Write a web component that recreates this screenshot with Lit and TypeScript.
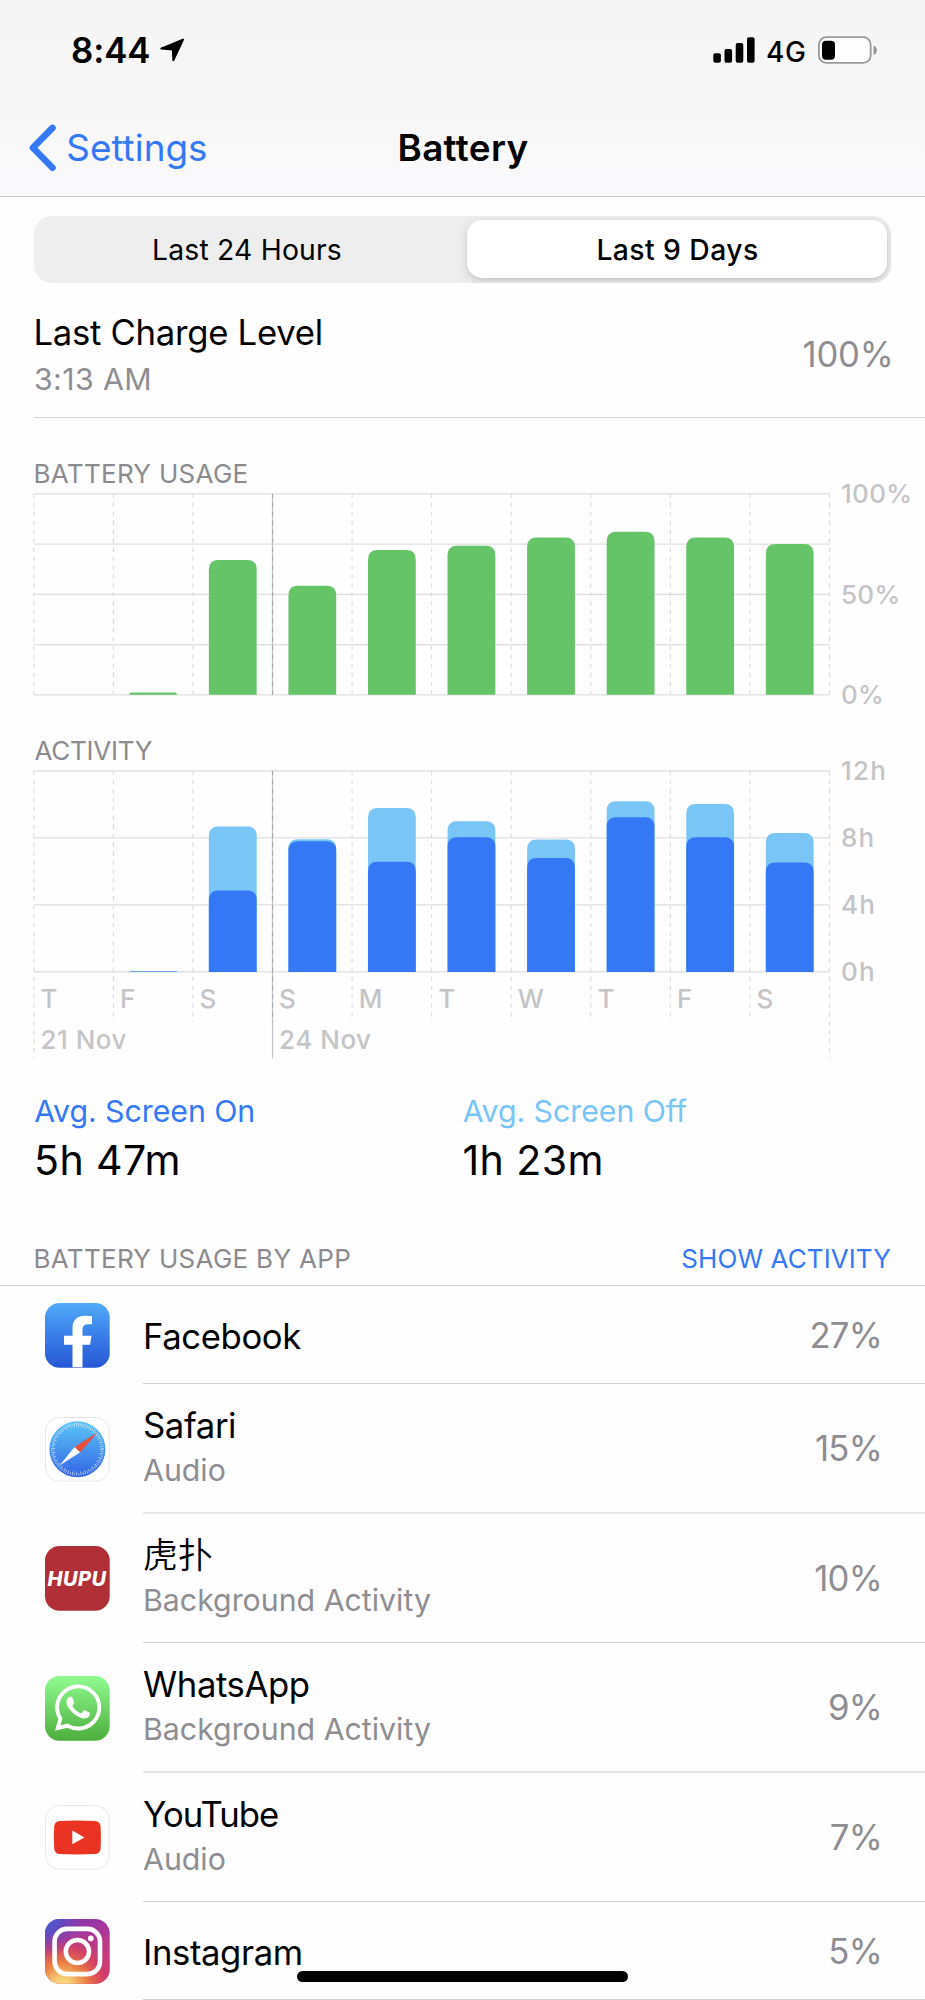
import { LitElement, html, svg, css, nothing } from "lit";
import { customElement, property, state } from "lit/decorators.js";
import { classMap } from "lit/directives/class-map.js";

type IconName = "facebook" | "safari" | "hupu" | "whatsapp" | "youtube" | "instagram";

interface AppUsage {
  name: string;
  detail?: string;
  share: string;
  icon: IconName;
}

interface Day {
  label: string;
  date?: string;
  level: number;
  total: number;
  screenOn: number;
}

const DAYS: Day[] = [
  { label: "T", date: "21 Nov", level: 0, total: 0, screenOn: 0 },
  { label: "F", level: 1.2, total: 0.035, screenOn: 0.02 },
  { label: "S", level: 67.1, total: 8.68, screenOn: 4.86 },
  { label: "S", date: "24 Nov", level: 54.2, total: 7.92, screenOn: 7.8 },
  { label: "M", level: 72.1, total: 9.78, screenOn: 6.57 },
  { label: "T", level: 74.1, total: 9, screenOn: 8.04 },
  { label: "W", level: 78.2, total: 7.9, screenOn: 6.8 },
  { label: "T", level: 81.1, total: 10.19, screenOn: 9.24 },
  { label: "F", level: 78.2, total: 10.03, screenOn: 8.04 },
  { label: "S", level: 75, total: 8.3, screenOn: 6.53 },
];

const APPS: AppUsage[] = [
  { name: "Facebook", share: "27%", icon: "facebook" },
  { name: "Safari", detail: "Audio", share: "15%", icon: "safari" },
  { name: "虎扑", detail: "Background Activity", share: "10%", icon: "hupu" },
  { name: "WhatsApp", detail: "Background Activity", share: "9%", icon: "whatsapp" },
  { name: "YouTube", detail: "Audio", share: "7%", icon: "youtube" },
  { name: "Instagram", share: "5%", icon: "instagram" },
];

const WHATSAPP_PATH =
  "M17.472 14.382c-.297-.149-1.758-.867-2.03-.967-.273-.099-.471-.148-.67.15-.197.297-.767.966-.94 1.164-.173.199-.347.223-.644.075-.297-.15-1.255-.463-2.39-1.475-.883-.788-1.48-1.761-1.653-2.059-.173-.297-.018-.458.13-.606.134-.133.298-.347.446-.52.149-.174.198-.298.298-.497.099-.198.05-.371-.025-.52-.075-.149-.669-1.612-.916-2.207-.242-.579-.487-.5-.669-.51-.173-.008-.371-.01-.57-.01-.198 0-.52.074-.792.372-.272.297-1.04 1.016-1.04 2.479 0 1.462 1.065 2.875 1.213 3.074.149.198 2.096 3.2 5.077 4.487.709.306 1.262.489 1.694.625.712.227 1.36.195 1.871.118.571-.085 1.758-.719 2.006-1.413.248-.694.248-1.289.173-1.413-.074-.124-.272-.198-.57-.347m-5.421 7.403h-.004a9.87 9.87 0 01-5.031-1.378l-.361-.214-3.741.982.998-3.648-.235-.374a9.86 9.86 0 01-1.51-5.26c.001-5.45 4.436-9.884 9.888-9.884 2.64 0 5.122 1.03 6.988 2.898a9.825 9.825 0 012.893 6.994c-.003 5.45-4.437 9.884-9.885 9.884m8.413-18.297A11.815 11.815 0 0012.05 0C5.495 0 .16 5.335.157 11.892c0 2.096.547 4.142 1.588 5.945L.057 24l6.305-1.654a11.882 11.882 0 005.683 1.448h.005c6.554 0 11.89-5.335 11.893-11.893a11.821 11.821 0 00-3.48-8.413z";

@customElement("app-icon")
export class AppIcon extends LitElement {
  @property() name: IconName = "facebook";

  static styles = css`
    :host { display: block; width: 65px; height: 65px; }
    svg { display: block; width: 65px; height: 65px; }
    .mark { font: italic 800 20px Inter, "Liberation Sans", sans-serif; letter-spacing: 0.5px; fill: #fff; }
  `;

  private tile(fill: string) {
    return svg`<rect x="0" y="0" width="64.7" height="64.7" rx="14.5" fill=${fill} />`;
  }

  private card() {
    return svg`<rect x="0.5" y="0.5" width="63.7" height="63.7" rx="14" fill="#fff" stroke="#e6e6e7" />`;
  }

  private art() {
    switch (this.name) {
      case "facebook":
        return svg`
          <defs><linearGradient id="fb" x1="0" y1="0" x2="0" y2="1">
            <stop offset="0" stop-color="#50acf8" /><stop offset="0.45" stop-color="#3b82ea" /><stop offset="1" stop-color="#2656d4" />
          </linearGradient></defs>
          ${this.tile("url(#fb)")}
          <path fill="#fff" d="M27.5 64.3V41.7H19V32.7H27.5V25.8C27.5 17.2 32 12.8 40 12.8C43 12.8 47 13.3 47 13.3V21.2H43C39 21.2 37.5 23.4 37.5 26.6V32.7H46.5L45.1 41.7H37.5V64.3Z" />`;
      case "safari":
        return svg`
          <defs><linearGradient id="sf" x1="0" y1="0" x2="0" y2="1">
            <stop offset="0" stop-color="#5bc6f8" /><stop offset="0.5" stop-color="#4795ee" /><stop offset="1" stop-color="#3263e6" />
          </linearGradient></defs>
          ${this.card()}
          <circle cx="32.4" cy="32.3" r="28" fill="url(#sf)" />
          <circle cx="32.4" cy="32.3" r="25" fill="none" stroke="#fff" stroke-opacity="0.65" stroke-width="2.6" stroke-dasharray="0.8 1.382" />
          <circle cx="32.4" cy="32.3" r="23.2" fill="none" stroke="#fff" stroke-opacity="0.6" stroke-width="1.8" stroke-dasharray="0.8 3.25" />
          <path fill="#fff" d="M14.5 48.4L29.6 29.9L35.3 35.2Z" />
          <path fill="#e94f3d" d="M52.4 15.6L29.6 29.9L35.3 35.2Z" />`;
      case "hupu":
        return svg`
          ${this.tile("#b02e35")}
          <text class="mark" x="2.5" y="40.2">HUPU</text>`;
      case "whatsapp":
        return svg`
          <defs><linearGradient id="wa" x1="0" y1="0" x2="0" y2="1">
            <stop offset="0" stop-color="#90fc90" /><stop offset="1" stop-color="#4cae3c" />
          </linearGradient></defs>
          ${this.tile("url(#wa)")}
          <path fill="#fff" transform="translate(9.9 8.4) scale(1.935)" d=${WHATSAPP_PATH} />`;
      case "youtube":
        return svg`
          ${this.card()}
          <path fill="#ea3323" d="M15 15.9Q32.4 15.2 49.8 15.9Q55.2 16.2 55.6 21.5Q56.3 32.5 55.6 43.4Q55.2 48.7 49.8 49Q32.4 49.8 15 49Q9.6 48.7 9.2 43.4Q8.5 32.5 9.2 21.5Q9.6 16.2 15 15.9Z" />
          <path fill="#fff" d="M27.3 25.6L39.4 32.4L27.3 39.3Z" />`;
      case "instagram":
        return svg`
          <defs>
            <linearGradient id="ig0" x1="0.2" y1="0" x2="0.6" y2="1">
              <stop offset="0" stop-color="#7a3ab2" /><stop offset="0.35" stop-color="#a8369c" /><stop offset="0.8" stop-color="#cf3a74" />
            </linearGradient>
            <radialGradient id="ig1" cx="0.27" cy="1.06" r="0.95">
              <stop offset="0" stop-color="#f9e08c" /><stop offset="0.15" stop-color="#f6cf75" />
              <stop offset="0.42" stop-color="#ea7a41" /><stop offset="0.68" stop-color="#d33f62" stop-opacity="0.85" />
              <stop offset="1" stop-color="#b0379a" stop-opacity="0" />
            </radialGradient>
            <radialGradient id="ig2" cx="0" cy="0" r="0.6">
              <stop offset="0" stop-color="#4364d8" /><stop offset="0.4" stop-color="#5551c8" stop-opacity="0.8" />
              <stop offset="1" stop-color="#7a3ab2" stop-opacity="0" />
            </radialGradient>
          </defs>
          ${this.tile("url(#ig0)")}${this.tile("url(#ig1)")}${this.tile("url(#ig2)")}
          <g fill="none" stroke="#fff">
            <rect x="9.6" y="9.9" width="45.4" height="45.2" rx="12.5" stroke-width="4.6" />
            <circle cx="32.4" cy="32.5" r="11.6" stroke-width="4.5" />
          </g>
          <circle cx="45.8" cy="19.4" r="2.8" fill="#fff" />`;
    }
  }

  render() {
    return html`<svg viewBox="0 0 65 65" aria-hidden="true">${this.art()}</svg>`;
  }
}

const COLUMN = 79.57;
const BAR = 47.8;
const PLOT_HEIGHT = 201;

/** Bar with rounded top corners, standing on the baseline. */
function barPath(x: number, height: number, base: number) {
  const r = Math.min(9.5, height);
  const top = base - height;
  return `M${x} ${base}V${top + r}Q${x} ${top} ${x + r} ${top}H${x + BAR - r}Q${x + BAR} ${top} ${x + BAR} ${top + r}V${base}Z`;
}

@customElement("usage-chart")
export class UsageChart extends LitElement {
  @property() kind: "level" | "activity" = "level";

  static styles = css`
    :host { display: block; }
    svg { display: block; width: 891px; overflow: visible; }
    .level { height: 202px; }
    .activity { height: 288px; }
    .rule { stroke: #dededf; stroke-width: 1.2; }
    .dash { stroke: #d9d9db; stroke-width: 1.1; stroke-dasharray: 4.47 4.47; }
    .week { stroke: #c4c4c6; stroke-width: 1.2; }
    .week-dash { stroke: #a6a6a8; stroke-width: 1.2; stroke-dasharray: 4.47 4.47; }
    .green { fill: #66c468; }
    .off { fill: #79c5f6; }
    .on { fill: #3478f6; }
    text { font: 500 26px Inter, "Liberation Sans", sans-serif; fill: #c4c4c6; }
    .pct { letter-spacing: 0.3px; }
    .hour { letter-spacing: 1.2px; }
    .date { letter-spacing: 0.5px; }
  `;

  render() {
    const activity = this.kind === "activity";
    const top = activity ? -0.1 : 0.8;
    const base = top + PLOT_HEIGHT;
    const steps = activity ? 3 : 4;
    const right = COLUMN * DAYS.length;
    const ticks = activity ? ["12h", "8h", "4h", "0h"] : ["100%", "50%", "0%"];
    return html`<svg class=${this.kind}>
      ${Array.from({ length: steps + 1 }, (_, i) => {
        const y = top + (PLOT_HEIGHT / steps) * i;
        return svg`<line class="rule" x1="0" x2=${right} y1=${y} y2=${y} />`;
      })}
      ${Array.from({ length: DAYS.length + 1 }, (_, i) => {
        const x = COLUMN * i - 0.2;
        const week = i === 3;
        const edge = i === 0 || week || i === DAYS.length;
        const end = activity ? (edge ? 287.5 : 250.8) : base;
        return svg`<line class=${week ? "week" : "dash"} x1=${x} x2=${x} y1=${top} y2=${end} />
          ${week ? svg`<line class="week-dash" x1=${x} x2=${x} y1=${top} y2=${activity ? 250.8 : base} />` : nothing}`;
      })}
      ${DAYS.map((d, i) => {
        const x = COLUMN * i + 15.7;
        if (!activity) return d.level ? svg`<path class="green" d=${barPath(x, (d.level / 100) * PLOT_HEIGHT, base)} />` : nothing;
        const unit = PLOT_HEIGHT / 12;
        return svg`
          ${d.total ? svg`<path class="off" d=${barPath(x, d.total * unit, base)} />
            <path class="on" d=${barPath(x, d.screenOn * unit, base)} />` : nothing}
          <text x=${COLUMN * i + 6.4} y="237">${d.label}</text>
          ${d.date ? svg`<text class="date" x=${COLUMN * i + 6.4} y="278.2">${d.date}</text>` : nothing}`;
      })}
      ${ticks.map((t, i) => svg`<text class=${activity ? "hour" : "pct"} x="807"
        y=${top + 9.2 + (PLOT_HEIGHT / (ticks.length - 1)) * i}>${t}</text>`)}
    </svg>`;
  }
}

@customElement("app-root")
export class AppRoot extends LitElement {
  @state() private range = 1;

  static styles = css`
    :host {
      display: block; position: relative; width: 925px; height: 2000px; overflow: hidden;
      background: #fefefe; color: #000; white-space: nowrap;
      font-family: Inter, "Noto Sans CJK SC", "Liberation Sans", sans-serif;
    }
    header { background: linear-gradient(#f5f5f5, #f7f7f7 55%, #fafafc); border-bottom: 1px solid #c9c9cb; }
    .status { display: flex; align-items: center; height: 100px; padding: 0 48px 0 71px; box-sizing: border-box; }
    .clock { font-size: 34.8px; font-weight: 600; letter-spacing: -0.1px; width: 88px; line-height: 100px; }
    .arrow { width: 26px; height: 26px; margin-right: auto; }
    .signal { width: 42px; height: 26px; }
    .network { font-size: 28px; font-weight: 500; letter-spacing: 0.5px; width: 52px; margin-left: 11px; padding-top: 3px; box-sizing: border-box; }
    .cell { width: 59px; height: 28px; }
    .nav { display: grid; grid-template-columns: 1fr auto 1fr; align-items: center; height: 96px; line-height: 44px; }
    .back { display: flex; align-items: center; color: #3478f6; font-size: 36.8px; letter-spacing: 0.04px; padding-left: 28px; }
    .back-label { padding-bottom: 1px; }
    .chevron { width: 30px; height: 50px; margin-right: 8.3px; }
    .title { margin: 0; font-size: 36.8px; font-weight: 600; letter-spacing: 0.36px; padding: 0 0 1px 1px; }
    .segments {
      display: flex; height: 67px; margin: 19px 34px 0; padding: 4px; box-sizing: border-box;
      border-radius: 18px; background: #eeeeee; overflow: hidden;
    }
    .segment {
      flex: 1; display: flex; align-items: center; justify-content: center; height: 59px; box-sizing: border-box;
      border-radius: 15px; font-size: 28.3px; letter-spacing: 0.2px; padding-right: 11px;
    }
    .selected {
      background: #fff; font-weight: 500; letter-spacing: 0.43px; flex: 0 0 420px; height: 58px; padding: 1px 0 0 1px;
      box-shadow: 0 3px 10px 1px rgba(0, 0, 0, 0.13), 0 2px 2px rgba(0, 0, 0, 0.05);
    }
    .charge {
      display: flex; align-items: center; justify-content: space-between; height: 134px; box-sizing: content-box;
      margin-left: 34px; padding-right: 31.5px; border-bottom: 1px solid #d4d4d6;
    }
    .charge-text { padding-top: 9px; }
    .charge-title { font-size: 34.7px; line-height: 48px; letter-spacing: -0.28px; margin-left: -0.6px; }
    .charge-time { font-size: 30.3px; line-height: 46px; letter-spacing: 0.4px; color: #8e8e92; }
    .charge-value { font-size: 34.7px; letter-spacing: -0.25px; color: #8e8e92; padding-top: 8px; }
    .caption { margin: 0; font-size: 26px; font-weight: 400; line-height: 33px; color: #8b8b8f; letter-spacing: 0.3px; margin-left: -0.5px; }
    .charts { display: block; padding: 39px 0 0 34px; }
    .battery-chart { padding: 3px 0 39px; }
    .activity-chart { padding-top: 4px; }
    .tight { letter-spacing: -0.25px; margin-left: 0.5px; }
    .stats { display: grid; grid-template-columns: 1fr 1fr; padding: 30px 34px 0; }
    .stat-label { font-size: 30.3px; line-height: 44px; letter-spacing: -0.04px; margin-left: 0.2px; }
    .stat-value { font-size: 41.1px; line-height: 52px; letter-spacing: 0.4px; margin-top: 1px; }
    .is-on { color: #3478f6; }
    .is-off { color: #79c5f6; }
    .list-head {
      display: flex; justify-content: space-between;
      padding: 56px 34px 10px; border-bottom: 1px solid #d0d0d2;
    }
    .toggle { font-size: 26px; line-height: 33px; color: #3478f6; letter-spacing: 0.1px; }
    .row { display: flex; align-items: stretch; padding-left: 45px; }
    .row app-icon { align-self: center; flex: none; margin-right: 33px; }
    .body {
      flex: 1; display: flex; align-items: center; justify-content: space-between; height: 97px;
      padding-right: 43px; border-bottom: 1px solid #d0d0d2;
    }
    .double { height: 128px; }
    .soft { border-bottom: 2px solid #e7e7e8; }
    .name { font-size: 34.7px; line-height: 46px; letter-spacing: -0.4px; padding-top: 3px; }
    .double .name { padding-top: 0; }
    .body .cjk { font-weight: 350; letter-spacing: 0.4px; }
    .body .snug { letter-spacing: -1px; }
    .detail { font-size: 30.3px; line-height: 45px; color: #8e8e92; padding-bottom: 1px; }
    .share { font-size: 34.7px; letter-spacing: -0.75px; color: #8e8e92; }
    .home { position: absolute; left: 297px; top: 1971px; width: 331px; height: 11px; border-radius: 6px; background: #000; }
  `;

  render() {
    return html`
      <header>
        <div class="status">
          <span class="clock">8:44</span>
          <svg class="arrow" viewBox="0 0 26 26"><path d="M24 2.6L14.3 23.3L13.8 12.4L2.3 11.6Z" stroke="#000" stroke-width="2" stroke-linejoin="round" /></svg>
          <svg class="signal" viewBox="0 0 42 26">
            <rect x="0.3" y="16.3" width="7.6" height="9.5" rx="2" /><rect x="11.5" y="12" width="7.6" height="13.8" rx="2" />
            <rect x="22.7" y="6" width="7.6" height="19.8" rx="2" /><rect x="34" y="0.2" width="7.6" height="25.6" rx="2" />
          </svg>
          <span class="network">4G</span>
          <svg class="cell" viewBox="0 0 59 28">
            <rect x="0.9" y="1.1" width="51.8" height="25.8" rx="7.5" fill="#fdfdfd" stroke="#9a9a9a" stroke-width="1.8" />
            <rect x="4" y="4.8" width="13" height="18.9" rx="4" />
            <path d="M55.6 9.5Q58.8 11 58.8 14.2T55.6 19Z" fill="#929292" />
          </svg>
        </div>
        <div class="nav">
          <span class="back">
            <svg class="chevron" viewBox="0 0 30 50"><path d="M24.5 4.9L4.9 24.8L24.5 44.7" fill="none" stroke="#3478f6" stroke-width="6.6" stroke-linecap="round" stroke-linejoin="round" /></svg>
            <span class="back-label">Settings</span>
          </span>
          <h1 class="title">Battery</h1>
        </div>
      </header>
      <div class="segments">
        ${["Last 24 Hours", "Last 9 Days"].map((t, i) => html`
          <span class=${classMap({ segment: true, selected: this.range === i })} @click=${() => (this.range = i)}>${t}</span>`)}
      </div>
      <section class="charge">
        <div class="charge-text">
          <div class="charge-title">Last Charge Level</div>
          <div class="charge-time">3:13 AM</div>
        </div>
        <span class="charge-value">100%</span>
      </section>
      <section class="charts">
        <h2 class="caption">BATTERY USAGE</h2>
        <usage-chart class="battery-chart" kind="level"></usage-chart>
        <h2 class="caption tight">ACTIVITY</h2>
        <usage-chart class="activity-chart" kind="activity"></usage-chart>
      </section>
      <section class="stats">
        <div><div class="stat-label is-on">Avg. Screen On</div><div class="stat-value">5h 47m</div></div>
        <div><div class="stat-label is-off">Avg. Screen Off</div><div class="stat-value">1h 23m</div></div>
      </section>
      <div class="list-head">
        <h2 class="caption">BATTERY USAGE BY APP</h2>
        <span class="toggle">SHOW ACTIVITY</span>
      </div>
      ${APPS.map((a) => html`
        <div class="row">
          <app-icon .name=${a.icon}></app-icon>
          <div class=${classMap({ body: true, double: !!a.detail, soft: a.icon === "safari" || a.icon === "whatsapp" })}>
            <div>
              <div class=${classMap({ name: true, cjk: a.icon === "hupu", snug: a.icon === "youtube" })}>${a.name}</div>
              ${a.detail ? html`<div class="detail">${a.detail}</div>` : nothing}
            </div>
            <span class="share">${a.share}</span>
          </div>
        </div>`)}
      <div class="home"></div>
    `;
  }
}
